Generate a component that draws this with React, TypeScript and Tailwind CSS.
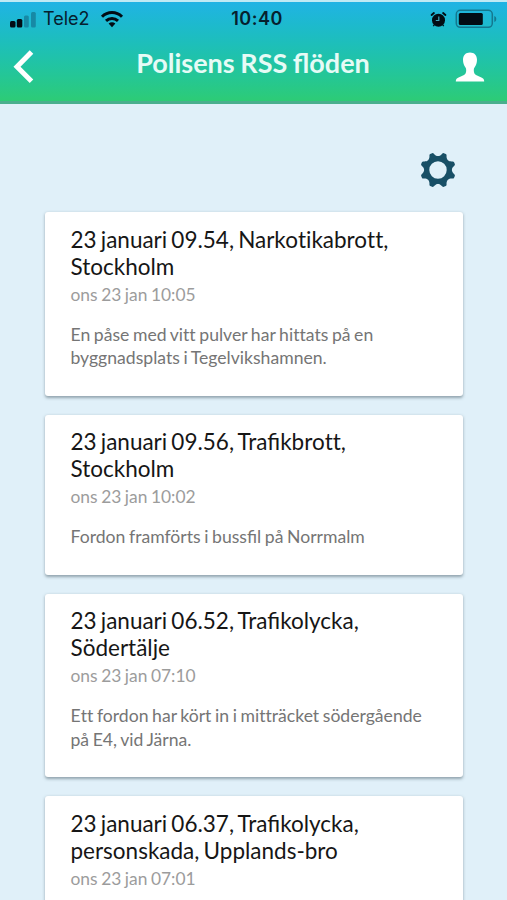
type FeedItem = {
  title: string[];
  date: string;
  text: string[];
};

const items: FeedItem[] = [
  {
    title: ["23 januari 09.54, Narkotikabrott,", "Stockholm"],
    date: "ons 23 jan 10:05",
    text: ["En påse med vitt pulver har hittats på en", "byggnadsplats i Tegelvikshamnen."],
  },
  {
    title: ["23 januari 09.56, Trafikbrott,", "Stockholm"],
    date: "ons 23 jan 10:02",
    text: ["Fordon framförts i bussfil på Norrmalm"],
  },
  {
    title: ["23 januari 06.52, Trafikolycka,", "Södertälje"],
    date: "ons 23 jan 07:10",
    text: ["Ett fordon har kört in i mitträcket södergående", "på E4, vid Järna."],
  },
  {
    title: ["23 januari 06.37, Trafikolycka,", "personskada, Upplands-bro"],
    date: "ons 23 jan 07:01",
    text: [],
  },
];

const StatusBar = () => (
  <div className="grid h-[34px] grid-cols-3 items-center pl-[9px] pr-[9px] font-['Inter',sans-serif] text-[#06202e]">
    <div className="flex items-center">
      <svg className="h-[17px] w-[28px]" viewBox="0 0 28 17">
        <rect x="1" y="10" width="5.500" height="6.500" rx="1.500" fill="#020c14" />
        <rect x="7.800" y="8" width="5.500" height="8.500" rx="1.500" fill="#020c14" />
        <rect x="15" y="4.500" width="4.800" height="12" rx="1.500" fill="#1789a5" />
        <rect x="22" y="1" width="4.800" height="15.500" rx="1.500" fill="#1789a5" />
      </svg>
      <span className="ml-[6px] text-[18px] leading-none">Tele2</span>
      <svg className="ml-[10px] h-[17px] w-[24px]" viewBox="0 0 24 17" fill="none" stroke="#020c14" strokeWidth="3">
        <path d="M2 5.800C7.700.2 16.300.2 22 5.800" />
        <path d="M6 9.900c3.500-3.300 8.500-3.300 12 0" />
        <path d="M8.600 12.600c2-1.800 4.800-1.800 6.800 0L12 16.200Z" fill="#020c14" stroke="none" />
      </svg>
    </div>
    <span className="pl-[7px] text-center text-[18px] font-semibold leading-none tracking-[0.5px]">10:40</span>
    <div className="flex items-center justify-end">
      <svg className="h-[17px] w-[17px]" viewBox="0 0 17 17">
        <circle cx="8.500" cy="9.200" r="6.500" fill="#020c14" />
        <path d="M1.600 4 3.900 2M15.400 4 13.100 2" stroke="#020c14" strokeWidth="1.900" strokeLinecap="round" />
        <path d="M4.500 13.500l-1.200 1.700M12.500 13.500l1.200 1.700" stroke="#020c14" strokeWidth="1.300" />
        <path d="M8.800 5.500v4H5.800" fill="none" stroke="#3fa5ba" strokeWidth="1.200" />
      </svg>
      <svg className="ml-[8px] h-[20px] w-[43px]" viewBox="0 0 43 20">
        <rect x="1.300" y="1.300" width="36" height="17" rx="4" fill="none" stroke="#14788f" strokeWidth="1.500" />
        <rect x="3.800" y="3.900" width="24" height="12" rx="1.500" fill="#020c14" />
        <path d="M39.300 7c2.600.5 2.600 5.500 0 6Z" fill="#14788f" />
      </svg>
    </div>
  </div>
);

const Header = () => (
  <header className="h-[104px] border-b-[3px] border-t-2 border-b-[#49af8d] border-t-[#bfe9f4] bg-linear-to-b from-[#21b2e6] to-[#2ecc71] bg-origin-border">
    <StatusBar />
    <div className="flex h-[62px] items-center justify-between pl-[13px] pr-[22px]">
      <button aria-label="Tillbaka" className="w-[38px]">
        <svg className="h-[34px] w-[22px]" viewBox="0 0 22 34">
          <path d="M18.500 2 4 16.800l14.500 14.500" fill="none" stroke="#fff" strokeWidth="5" />
        </svg>
      </button>
      <h1 className="pb-[10px] text-[27px] font-bold leading-none text-[#e6fbf6] [word-spacing:-1px]">
        Polisens RSS flöden
      </h1>
      <button aria-label="Profil">
        <svg className="h-[30px] w-[30px]" viewBox="0 0 30 30">
          <path
            fill="#fff"
            d="M15 .5c-4.300 0-7 2.800-7 7.200 0 3.100 1 5.800 2.300 7.600.8 1.100.9 2 .9 3.300 0 2.300-.9 3.900-2.700 4.700L3.600 25.500C1.500 26.300.8 27.600.8 29.500h28.400c0-1.900-.7-3.200-2.800-4l-4.900-2.200c-1.800-.8-2.700-2.400-2.700-4.700 0-1.300.1-2.200.9-3.300C21 13.500 22 10.800 22 7.700 22 3.300 19.300.5 15 .5Z"
          />
        </svg>
      </button>
    </div>
  </header>
);

// Eight teeth, one every 45 degrees
const teeth = [22.5, 67.5, 112.5, 157.5, 202.5, 247.5, 292.5, 337.5];

const GearIcon = () => (
  <svg className="h-[36px] w-[36px]" viewBox="-18 -18 36 36">
    <circle r="11.300" fill="none" stroke="#184f66" strokeWidth="5.200" />
    {teeth.map((angle) => (
      <path
        key={angle}
        transform={`rotate(${angle})`}
        fill="#184f66"
        d="M-5.600-12.500C-3.600-13.700-3-14.900-2.400-16.600Q-2-17.800-1-17.800H1Q2-17.800 2.400-16.600C3-14.900 3.600-13.700 5.600-12.500Z"
      />
    ))}
  </svg>
);

// Keeps the fi ligature but leaves tt and ti as separate letters
const Line = ({ text }: { text: string }) => (
  <span className="block whitespace-nowrap">
    {text.split(/(tti|tt|ti)/).map((part, i) =>
      i % 2 ? (
        <span key={i} className="[font-variant-ligatures:none]">
          {part}
        </span>
      ) : (
        part
      )
    )}
  </span>
);

const FeedCard = ({ item }: { item: FeedItem }) => (
  <article className="rounded-[3px] bg-white px-[25.5px] pb-[25.6px] pt-[13.4px] shadow-[0_1.5px_3px_rgba(70,90,100,0.5)]">
    <h2 className="text-[22.5px] leading-[27px] text-[#161616] [word-spacing:-1.6px]">
      {item.title.map((line) => (
        <Line key={line} text={line} />
      ))}
    </h2>
    <p className="text-[17.4px] leading-[29px] text-[#9c9c9c] [word-spacing:-0.9px]">{item.date}</p>
    <div className="mt-[14px] min-h-[24px] text-[17.6px] leading-[23.7px] text-[#757575] [word-spacing:-0.9px]">
      {item.text.map((line) => (
        <Line key={line} text={line} />
      ))}
    </div>
  </article>
);

export default function App() {
  return (
    <div className="h-[900px] w-[507px] overflow-hidden bg-[#e0f0f9] font-['Lato',sans-serif]">
      <Header />
      <main className="pl-[45px] pr-[44px]">
        <div className="flex h-[108.4px] justify-end pr-[7px] pt-[48px]">
          <button aria-label="Inställningar" className="h-[36px]">
            <GearIcon />
          </button>
        </div>
        <div className="flex flex-col gap-[19px]">
          {items.map((item) => (
            <FeedCard key={item.title.join(" ")} item={item} />
          ))}
        </div>
      </main>
    </div>
  );
}
